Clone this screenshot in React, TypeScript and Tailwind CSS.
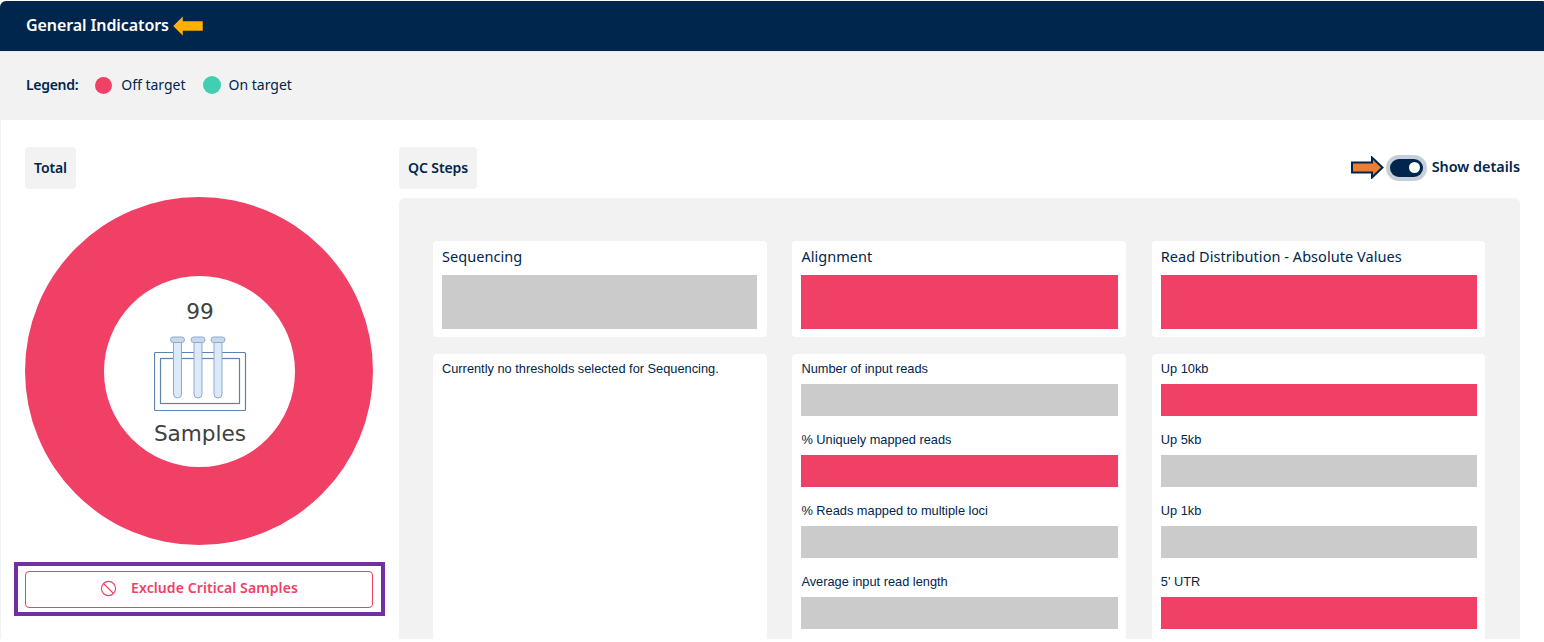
import { Ban } from "lucide-react";

const uiFont = "font-['Noto_Sans',sans-serif]";

type Row = { label: string; off?: boolean };

const alignmentRows: Row[] = [
  { label: "Number of input reads" },
  { label: "% Uniquely mapped reads", off: true },
  { label: "% Reads mapped to multiple loci" },
  { label: "Average input read length" },
];

const distributionRows: Row[] = [
  { label: "Up 10kb", off: true },
  { label: "Up 5kb" },
  { label: "Up 1kb" },
  { label: "5' UTR", off: true },
];

function Chip({ label }: { label: string }) {
  return (
    <div className="flex h-[42px] items-center rounded-[4px] bg-[#f2f2f2] px-[9px] pb-[2px] text-[14px] font-semibold tracking-[-0.1px] text-[#00264d]">
      {label}
    </div>
  );
}

function StepHeader({ title, off, narrow }: { title: string; off?: boolean; narrow?: boolean }) {
  return (
    <div className={narrow ? "h-[96px] rounded-[4px] bg-white pl-[9px] pr-[10px] pt-[4px]" : "h-[96px] rounded-[4px] bg-white pl-[9px] pr-[8px] pt-[4px]"}>
      <p className="h-[30px] text-[14.5px] leading-[22px] tracking-[0.05px] text-[#00264d]">{title}</p>
      <div className={off ? "h-[54px] bg-[#f04066]" : "h-[54px] bg-[#cbcbcb]"} />
    </div>
  );
}

function StepDetails({ rows }: { rows: Row[] }) {
  return (
    <div className="h-[300px] rounded-[4px] bg-white pl-[9px] pr-[8px] pt-[6px]">
      {rows.map((row) => (
        <div key={row.label} className="h-[71px]">
          <p className="h-[24px] font-['Liberation_Sans',sans-serif] text-[12.8px] leading-[18px] text-[#00264d]">
            {row.label}
          </p>
          <div className={row.off ? "h-[32px] bg-[#f04066]" : "h-[32px] bg-[#cbcbcb]"} />
        </div>
      ))}
    </div>
  );
}

function TubeRack() {
  const tubes = [23.5, 44, 64];
  return (
    <svg width="93" height="76" viewBox="0 0 93 76" fill="none">
      <rect x="0.5" y="16.5" width="91" height="58" rx="1" stroke="#5b83ad" strokeWidth="1.2" />
      <rect x="6.5" y="22.5" width="79" height="45" stroke="#5b83ad" strokeWidth="1.2" />
      {tubes.map((x) => (
        <g key={x}>
          <path
            d={`M${x - 4} 6V58a4 4 0 0 0 8 0V6Z`}
            fill="#dce9f8"
            stroke="#8fabc9"
            strokeWidth="1"
          />
          <rect x={x - 7} y="1" width="14" height="5.5" rx="2.7" fill="#c9d9ec" stroke="#8fabc9" strokeWidth="1" />
        </g>
      ))}
    </svg>
  );
}

function ArrowLeft() {
  return (
    <svg width="34" height="22" viewBox="0 0 34 22" className="absolute left-[171px] top-[14px]">
      <path d="M2 11 12 1v5h20v10H12v5Z" fill="#ffb000" stroke="#00264d" strokeWidth="0.5" />
    </svg>
  );
}

function ArrowRight() {
  return (
    <svg width="33" height="23" viewBox="0 0 33 23">
      <path d="M1 6.5h20V1.5l10.5 10L21 21.5v-5H1Z" fill="#ed7d31" stroke="#00264d" strokeWidth="2" />
    </svg>
  );
}

export default function App() {
  return (
    <div className={`${uiFont} h-[642px] w-[1544px] bg-white`}>
      <div className="h-[639px] overflow-hidden pt-[1px]">
        <header className="relative flex h-[50px] items-center rounded-tl-[6px] rounded-tr-[1px] bg-[#00264d] pl-[26px]">
          <h1 className="pb-[3px] text-[16px] font-semibold tracking-[-0.09px] text-white">General Indicators</h1>
          <ArrowLeft />
        </header>

        <div className="flex h-[69px] items-center border-t border-[#e4e9ef] bg-[#f2f2f2] pb-[2px] pl-[26px] text-[14px] text-[#00264d]">
          <span className="mb-[2px] font-semibold tracking-[-0.3px]">Legend:</span>
          <span className="ml-[17px] h-[17px] w-[17px] rounded-full bg-[#f04066]" />
          <span className="mb-[2px] ml-[9px]">Off target</span>
          <span className="ml-[17px] h-[18px] w-[18px] rounded-full bg-[#40d0b0]" />
          <span className="mb-[2px] ml-[8px]">On target</span>
        </div>

        <main className="flex gap-[26px] border-l border-[#f2f2f2] pl-[24px] pr-[24px] pt-[27px]">
          <section className="w-[348px] shrink-0">
            <div className="flex">
              <Chip label="Total" />
            </div>
            <div className="mt-[8px] flex h-[348px] w-[348px] items-center justify-center rounded-full bg-[#f04066]">
              <div className="flex h-[191px] w-[191px] flex-col items-center rounded-full bg-white pl-[2px] pt-[23px] font-['DejaVu_Sans',sans-serif] text-[21.6px] leading-[26px] text-[#404040]">
                <span>99</span>
                <div className="mt-[11px] h-[76px]">
                  <TubeRack />
                </div>
                <span className="mt-[9px]">Samples</span>
              </div>
            </div>
            <div className="relative mt-[26px]">
              <button
                type="button"
                className="flex h-[37px] w-full items-center justify-center gap-[14px] rounded-[4px] border-[1.5px] border-[#f04066] bg-white pb-[4px] text-[14px] font-semibold tracking-[0.1px] text-[#f04066]"
              >
                <Ban size={17} strokeWidth={1.6} className="mt-[1px]" />
                Exclude Critical Samples
              </button>
              <div className="absolute -bottom-[8px] -left-[11px] -right-[12px] -top-[9px] border-[4px] border-[#7030a0]" />
            </div>
          </section>

          <section className="min-w-0 flex-1">
            <div className="flex items-center justify-between">
              <Chip label="QC Steps" />
              <div className="flex items-center text-[14.4px] font-semibold text-[#00264d]">
                <ArrowRight />
                <div className="ml-[6px] flex h-[18px] w-[33px] items-center justify-end rounded-full bg-[#00264d] pr-[3px] ring-4 ring-[#c5ced9]">
                  <span className="h-[11px] w-[11px] rounded-full bg-white" />
                </div>
                <span className="mb-[2px] ml-[9px]">Show details</span>
              </div>
            </div>

            <div className="mt-[9px] h-[500px] rounded-[6px] bg-[#f2f2f2] pl-[34px] pr-[35px] pt-[43px]">
              <div className="grid grid-cols-[334px_334px_333px] gap-x-[25.4px] gap-y-[17px]">
                <StepHeader title="Sequencing" narrow />
                <StepHeader title="Alignment" off />
                <StepHeader title="Read Distribution - Absolute Values" off />
                <div className="h-[300px] rounded-[4px] bg-white px-[9px] pt-[6px] font-['Liberation_Sans',sans-serif] text-[12.8px] leading-[18px] text-[#00264d]">
                  Currently no thresholds selected for Sequencing.
                </div>
                <StepDetails rows={alignmentRows} />
                <StepDetails rows={distributionRows} />
              </div>
            </div>
          </section>
        </main>
      </div>
    </div>
  );
}
